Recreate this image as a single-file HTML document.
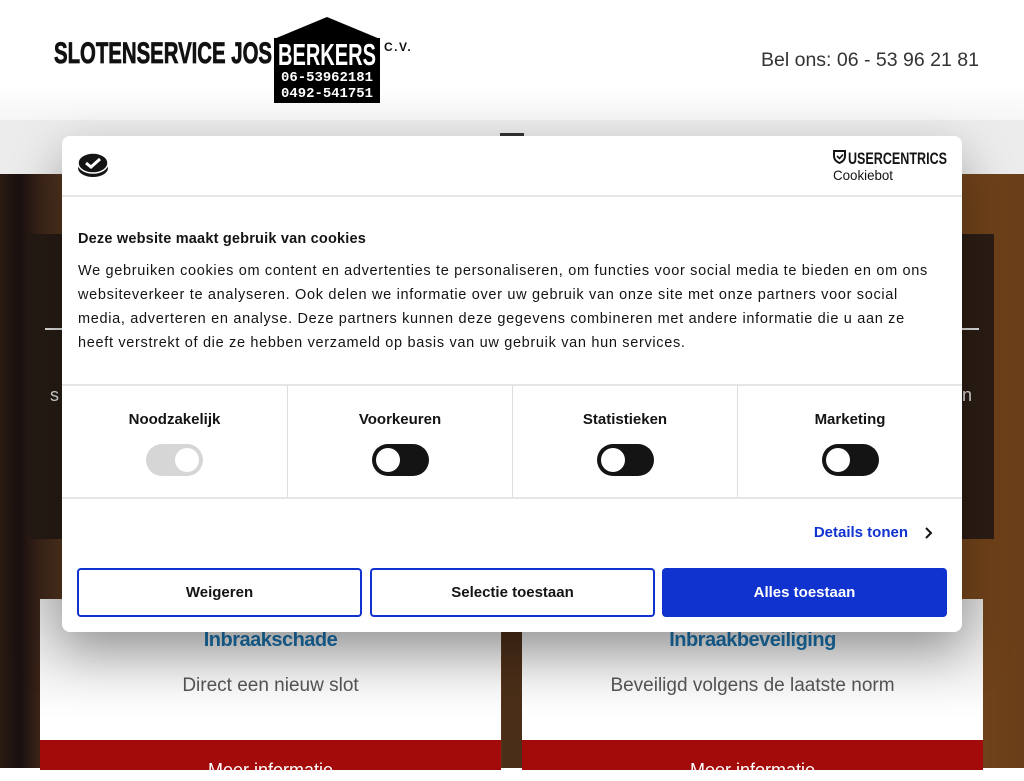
<!DOCTYPE html>
<html><head><meta charset="utf-8"><style>
*{margin:0;padding:0;box-sizing:border-box}
body{width:1024px;height:768px;overflow:hidden;position:relative;font-family:"Liberation Sans",Arial,sans-serif;background:#fff}
.hdr{position:absolute;left:0;top:0;width:1024px;height:120px;background:linear-gradient(#fff 70%,#f6f6f6)}
.nav{position:absolute;left:0;top:120px;width:1024px;height:54px;background:#ececec}
.bg{position:absolute;left:0;top:174px;width:1024px;height:594px;background:
linear-gradient(90deg,#2a1a12 0,#1a1010 20px,#3a2418 40px,#5a3a22 70px,#4a2e1a 120px,#6a4222 300px,#5a3418 500px,#70421a 700px,#7a4a1c 900px,#6a3e18 1024px)}
.dark{position:absolute;left:30px;top:234px;width:964px;height:305px;background:rgba(35,25,20,.9)}
.line{position:absolute;top:328px;height:2px;background:#ddd}
.card{position:absolute;top:599px;width:461px;height:169px;background:linear-gradient(#ddd,#fff 70%)}
.card h3{position:absolute;top:30px;width:100%;text-align:center;color:#1a6fa8;font-size:20px;font-weight:bold;letter-spacing:-.5px}
.card p{position:absolute;top:76px;width:100%;text-align:center;color:#555;font-size:19px}
.card .red{position:absolute;top:141px;left:0;width:100%;height:30px;background:#a30b0b;color:#fff;text-align:center;font-size:18px;padding-top:20px}
.dlg{position:absolute;left:62px;top:136px;width:900px;height:496px;background:#fff;border-radius:8px;box-shadow:0 20px 50px rgba(0,0,0,.35)}
.dlg .hl{position:absolute;left:0;width:900px;height:2px;background:#e6e6e6}
.txt{position:absolute;left:16px;width:880px;font-size:14.5px;line-height:24px;color:#141414;letter-spacing:.68px;white-space:nowrap}
.cat{position:absolute;top:250px;width:225px;height:112px;text-align:center;font-size:15px;font-weight:bold;color:#141414;padding-top:25px}
.tg{position:absolute;left:84px;top:58px;width:57px;height:32px;border-radius:16px;background:#141414}
.tg i{position:absolute;left:4px;top:4px;width:24px;height:24px;border-radius:50%;background:#fff}
.btn{position:absolute;top:432px;width:285px;height:49px;border:2px solid #1032cf;border-radius:4px;text-align:center;font-size:15px;font-weight:bold;line-height:45px;color:#141414;background:#fff}
</style></head><body>
<div class="hdr">
<svg style="position:absolute;left:54px;top:36px" width="220" height="32"><text x="0" y="27" font-family="Liberation Sans" font-weight="bold" font-size="30" fill="#111" textLength="218" lengthAdjust="spacingAndGlyphs" stroke="#111" stroke-width=".8">SLOTENSERVICE JOS</text></svg>
<svg style="position:absolute;left:274px;top:17px" width="106" height="86"><polygon points="0,22 53,0 106,22" fill="#000"/><rect x="0" y="21" width="106" height="65" fill="#000"/>
<text x="53" y="48" text-anchor="middle" font-family="Liberation Sans" font-weight="bold" font-size="31" fill="#fff" textLength="98" lengthAdjust="spacingAndGlyphs">BERKERS</text>
<text x="53" y="64" text-anchor="middle" font-family="Liberation Mono" font-weight="bold" font-size="14" fill="#fff" textLength="92" lengthAdjust="spacingAndGlyphs">06-53962181</text>
<text x="53" y="80" text-anchor="middle" font-family="Liberation Mono" font-weight="bold" font-size="14" fill="#fff" textLength="92" lengthAdjust="spacingAndGlyphs">0492-541751</text></svg>
<div style="position:absolute;left:384px;top:40px;font-weight:bold;font-size:12px;letter-spacing:1.5px;color:#111">C.V.</div>
<div style="position:absolute;left:761px;top:49px;font-size:19.5px;color:#333">Bel ons: 06 - 53 96 21 81</div>
</div>
<div class="nav"><div style="position:absolute;left:500px;top:13px;width:24px;height:3px;background:#333"></div></div>
<div class="bg"></div>
<div class="dark"></div>
<div class="line" style="left:45px;width:30px"></div><div class="line" style="left:950px;width:29px"></div>
<div style="position:absolute;left:50px;top:385px;color:#ddd;font-size:18px">s</div>
<div style="position:absolute;left:962px;top:385px;color:#ddd;font-size:18px">n</div>
<div class="card" style="left:40px"><h3>Inbraakschade</h3><p>Direct een nieuw slot</p><div class="red">Meer informatie</div></div>
<div class="card" style="left:522px"><h3>Inbraakbeveiliging</h3><p>Beveiligd volgens de laatste norm</p><div class="red">Meer informatie</div></div>
<div style="position:absolute;left:502px;top:632px;width:20px;height:136px;background:#4a2e18"></div>
<div class="dlg">
<svg style="position:absolute;left:15px;top:16px" width="32" height="26" viewBox="0 0 32 26"><ellipse cx="16" cy="16" rx="15" ry="9" fill="#141414"/><ellipse cx="16" cy="11" rx="15" ry="10" fill="#141414" stroke="#fff" stroke-width="1.5"/><path d="M9 11l5 4 9-8" stroke="#fff" stroke-width="3" fill="none"/></svg>
<svg style="position:absolute;left:770px;top:12px" width="118" height="36">
<path d="M2 3h11v5c0 4-3 6-5.5 7C5 14 2 12 2 8z" fill="none" stroke="#141414" stroke-width="2"/><path d="M5 8l2.5 2.5 3.5-4" fill="none" stroke="#141414" stroke-width="1.6"/>
<text x="16" y="16" font-family="Liberation Sans" font-weight="bold" font-size="17" fill="#141414" textLength="99" lengthAdjust="spacingAndGlyphs">USERCENTRICS</text>
<text x="1" y="32" font-family="Liberation Sans" font-size="14" fill="#141414" textLength="60" lengthAdjust="spacingAndGlyphs">Cookiebot</text></svg>
<div class="hl" style="top:59px"></div>
<div style="position:absolute;left:16px;top:95px;font-size:14.5px;font-weight:bold;color:#141414;letter-spacing:.2px">Deze website maakt gebruik van cookies</div>
<div class="txt" style="top:123px">We gebruiken cookies om content en advertenties te personaliseren, om functies voor social media te bieden en om ons<br>websiteverkeer te analyseren. Ook delen we informatie over uw gebruik van onze site met onze partners voor social<br>media, adverteren en analyse. Deze partners kunnen deze gegevens combineren met andere informatie die u aan ze<br>heeft verstrekt of die ze hebben verzameld op basis van uw gebruik van hun services.</div>
<div class="hl" style="top:248px"></div>
<div class="cat" style="left:0">Noodzakelijk<div class="tg" style="background:#d6d6d6"><i style="left:29px"></i></div></div>
<div class="cat" style="left:225px;border-left:1px solid #ddd">Voorkeuren<div class="tg"><i></i></div></div>
<div class="cat" style="left:450px;border-left:1px solid #ddd">Statistieken<div class="tg"><i></i></div></div>
<div class="cat" style="left:675px;border-left:1px solid #ddd">Marketing<div class="tg"><i></i></div></div>
<div class="hl" style="top:361px"></div>
<div style="position:absolute;right:54px;top:388px;font-size:15px;font-weight:bold;color:#1032cf">Details tonen</div>
<svg style="position:absolute;right:28px;top:390px" width="10" height="14"><path d="M2 2l5 5-5 5" stroke="#141414" stroke-width="2" fill="none"/></svg>
<div class="btn" style="left:15px">Weigeren</div>
<div class="btn" style="left:308px">Selectie toestaan</div>
<div class="btn" style="left:600px;background:#1032cf;color:#fff">Alles toestaan</div>
</div>
</body></html>
